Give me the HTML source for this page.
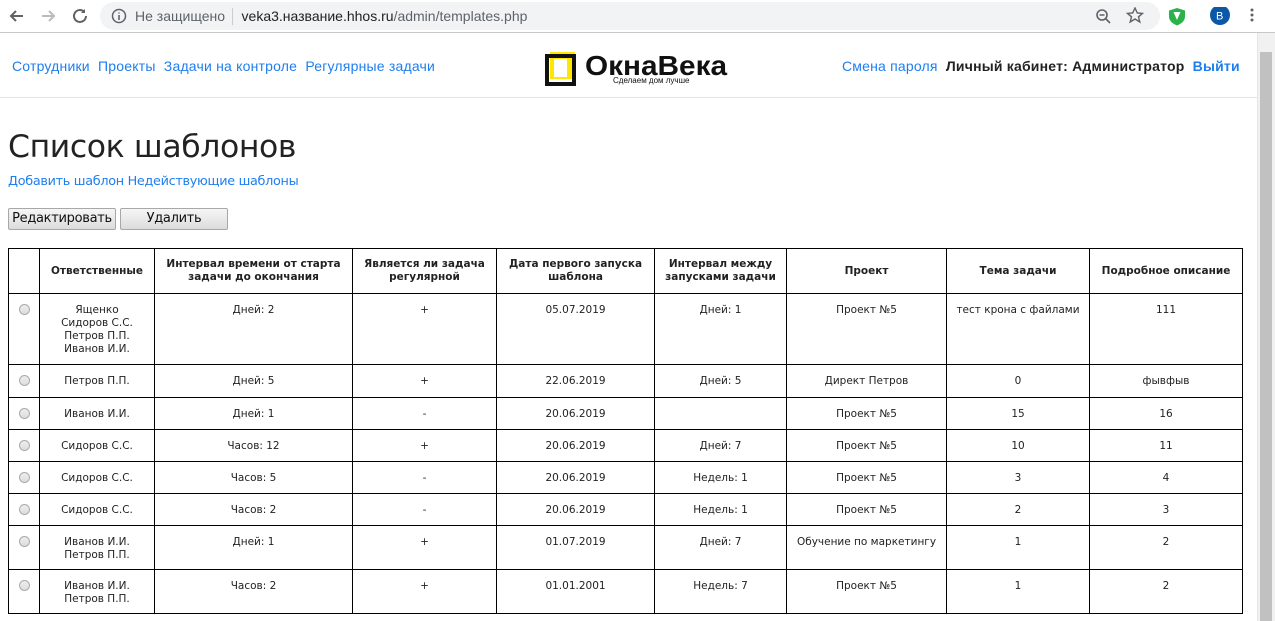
<!DOCTYPE html>
<html><head><meta charset="utf-8">
<style>
*{box-sizing:border-box}
body{margin:0;width:1275px;height:621px;overflow:hidden;background:#fff;font-family:"Liberation Sans","DejaVu Sans",sans-serif;position:relative}
.chrome{position:absolute;left:0;top:0;width:1275px;height:33px;background:#fff;border-bottom:1px solid #c8c8c8}
.omni{position:absolute;left:100px;top:2px;width:1060px;height:28px;background:#f1f3f4;border-radius:14px}
.url{position:absolute;left:135px;top:8px;font-size:14px;color:#222;white-space:nowrap}
.url .g{color:#5f6368}
.sb{position:absolute;left:1257px;top:33px;width:18px;height:588px;background:#f1f1f1;border-left:1px solid #e6e6e6}
.thumb{position:absolute;left:1260px;top:52px;width:12px;height:569px;background:#c1c1c1}
a{color:#1a73e8;text-decoration:none}
.nav{position:absolute;top:58px;font-size:14px;letter-spacing:0.2px;color:#1e7ef0;white-space:nowrap}
.hdrline{position:absolute;left:0;top:97px;width:1257px;height:1px;background:#e5e5e5}
h1{position:absolute;left:8px;top:129px;margin:0;font-weight:normal;font-size:31.5px;color:#222;font-family:"DejaVu Sans",sans-serif;letter-spacing:-0.4px}
.links{position:absolute;left:8px;top:174px;font-size:12.8px;font-family:"DejaVu Sans",sans-serif;color:#1e7ef0;letter-spacing:-0.3px}
.btn{position:absolute;top:208px;height:22px;border:1px solid #a8a8a8;background:linear-gradient(#f6f6f6,#dcdcdc);border-radius:2px;font-size:13px;font-family:"DejaVu Sans",sans-serif;text-align:center;line-height:20px;color:#111;letter-spacing:-0.3px}
table{position:absolute;left:8px;top:248px;border-collapse:collapse;font-family:"DejaVu Sans",sans-serif;font-size:10.5px;color:#222;table-layout:fixed}
td,th{border:1px solid #000;text-align:center;vertical-align:top;padding:0 3px;line-height:13px}
th{font-weight:bold;vertical-align:middle;font-size:10.5px}
td{padding-top:10px}
.r{display:block;width:11px;height:11px;border:1px solid #aaa;border-radius:50%;background:linear-gradient(#eee,#ddd);margin:0 auto 0 7px}
</style></head><body>
<div class="chrome">
<svg style="position:absolute;left:8px;top:8px" width="80" height="16" viewBox="0 0 80 16"><path d="M15 8H3M8 3L3 8l5 5" stroke="#5f6368" stroke-width="2" fill="none"/><path d="M34 8h12M41 3l5 5-5 5" stroke="#bbb" stroke-width="2" fill="none"/><path d="M78 8a6 6 0 1 1-2-4.5" stroke="#5f6368" stroke-width="2" fill="none"/><path d="M77 1v4h-4z" fill="#5f6368"/></svg>
<div class="omni"></div>
<svg style="position:absolute;left:111px;top:8px" width="16" height="16"><circle cx="8" cy="8" r="6.5" stroke="#5f6368" stroke-width="1.5" fill="none"/><path d="M8 7v5M8 4.5v1" stroke="#5f6368" stroke-width="1.6"/></svg>
<div class="url"><span class="g">Не защищено</span> <span style="color:#ccc">│</span> veka3.название.hhos.ru<span class="g">/admin/templates.php</span></div>
<svg style="position:absolute;left:1095px;top:7px" width="165" height="20"><circle cx="7" cy="8" r="5" stroke="#5f6368" stroke-width="1.6" fill="none"/><path d="M11 12l4 4M4.5 8h5" stroke="#5f6368" stroke-width="1.6"/><path d="M40 1l2.3 5 5.2.4-4 3.4 1.3 5.2L40 12l-4.8 3 1.3-5.2-4-3.4 5.2-.4z" stroke="#5f6368" stroke-width="1.4" fill="none"/><path d="M82 1l8 2.5v6c0 4.5-3.5 7-8 9-4.5-2-8-4.5-8-9v-6z" fill="#2bb34a"/><path d="M78.5 5h7l-3.5 8z" fill="#fff"/><circle cx="125" cy="8" r="10" fill="#0b57a8"/><text x="121" y="12.5" font-size="11" fill="#fff" font-family="Liberation Sans">B</text><circle cx="157" cy="3" r="1.5" fill="#5f6368"/><circle cx="157" cy="8" r="1.5" fill="#5f6368"/><circle cx="157" cy="13" r="1.5" fill="#5f6368"/></svg>
</div>
<div class="sb"></div><div class="thumb"></div>
<div class="nav" style="left:12px"><a style="color:#1e7ef0">Сотрудники</a>&nbsp; <a style="color:#1e7ef0">Проекты</a>&nbsp; <a style="color:#1e7ef0">Задачи на контроле</a>&nbsp; <a style="color:#1e7ef0">Регулярные задачи</a></div>
<svg style="position:absolute;left:545px;top:51px" width="190" height="36"><rect x="5" y="1" width="25" height="27" fill="#ffe600"/><rect x="2" y="5" width="27" height="28" fill="none" stroke="#111" stroke-width="4"/><rect x="9" y="8" width="13" height="18" fill="#fff"/><text x="40" y="24" font-size="28" font-weight="bold" font-family="Liberation Sans" fill="#111" textLength="142" lengthAdjust="spacingAndGlyphs">ОкнаВека</text><text x="68" y="32" font-size="8" font-family="Liberation Sans" fill="#111">Сделаем дом лучше</text></svg>
<div class="nav" style="left:842px"><a style="color:#1e7ef0">Смена пароля</a>&nbsp; <b style="color:#222">Личный кабинет: Администратор</b>&nbsp; <b style="color:#1e7ef0">Выйти</b></div>
<div class="hdrline"></div>
<h1>Список шаблонов</h1>
<div class="links">Добавить шаблон Недействующие шаблоны</div>
<div class="btn" style="left:8px;width:108px">Редактировать</div>
<div class="btn" style="left:120px;width:108px">Удалить</div>
<table>
<colgroup><col style="width:31px"><col style="width:115px"><col style="width:198px"><col style="width:144px"><col style="width:158px"><col style="width:132px"><col style="width:160px"><col style="width:143px"><col style="width:153px"></colgroup>
<tr style="height:45px"><th></th><th>Ответственные</th><th>Интервал времени от старта задачи до окончания</th><th>Является ли задача регулярной</th><th>Дата первого запуска шаблона</th><th>Интервал между запусками задачи</th><th>Проект</th><th>Тема задачи</th><th>Подробное описание</th></tr>
<tr style="height:71px"><td><i class="r"></i></td><td>Ященко<br>Сидоров С.С.<br>Петров П.П.<br>Иванов И.И.</td><td>Дней: 2</td><td>+</td><td>05.07.2019</td><td>Дней: 1</td><td>Проект №5</td><td>тест крона с файлами</td><td>111</td></tr>
<tr style="height:33px"><td><i class="r"></i></td><td>Петров П.П.</td><td>Дней: 5</td><td>+</td><td>22.06.2019</td><td>Дней: 5</td><td>Директ Петров</td><td>0</td><td>фывфыв</td></tr>
<tr style="height:32px"><td><i class="r"></i></td><td>Иванов И.И.</td><td>Дней: 1</td><td>-</td><td>20.06.2019</td><td></td><td>Проект №5</td><td>15</td><td>16</td></tr>
<tr style="height:32px"><td><i class="r"></i></td><td>Сидоров С.С.</td><td>Часов: 12</td><td>+</td><td>20.06.2019</td><td>Дней: 7</td><td>Проект №5</td><td>10</td><td>11</td></tr>
<tr style="height:32px"><td><i class="r"></i></td><td>Сидоров С.С.</td><td>Часов: 5</td><td>-</td><td>20.06.2019</td><td>Недель: 1</td><td>Проект №5</td><td>3</td><td>4</td></tr>
<tr style="height:32px"><td><i class="r"></i></td><td>Сидоров С.С.</td><td>Часов: 2</td><td>-</td><td>20.06.2019</td><td>Недель: 1</td><td>Проект №5</td><td>2</td><td>3</td></tr>
<tr style="height:44px"><td><i class="r"></i></td><td>Иванов И.И.<br>Петров П.П.</td><td>Дней: 1</td><td>+</td><td>01.07.2019</td><td>Дней: 7</td><td>Обучение по маркетингу</td><td>1</td><td>2</td></tr>
<tr style="height:44px"><td><i class="r"></i></td><td>Иванов И.И.<br>Петров П.П.</td><td>Часов: 2</td><td>+</td><td>01.01.2001</td><td>Недель: 7</td><td>Проект №5</td><td>1</td><td>2</td></tr>
</table>
</body></html>
